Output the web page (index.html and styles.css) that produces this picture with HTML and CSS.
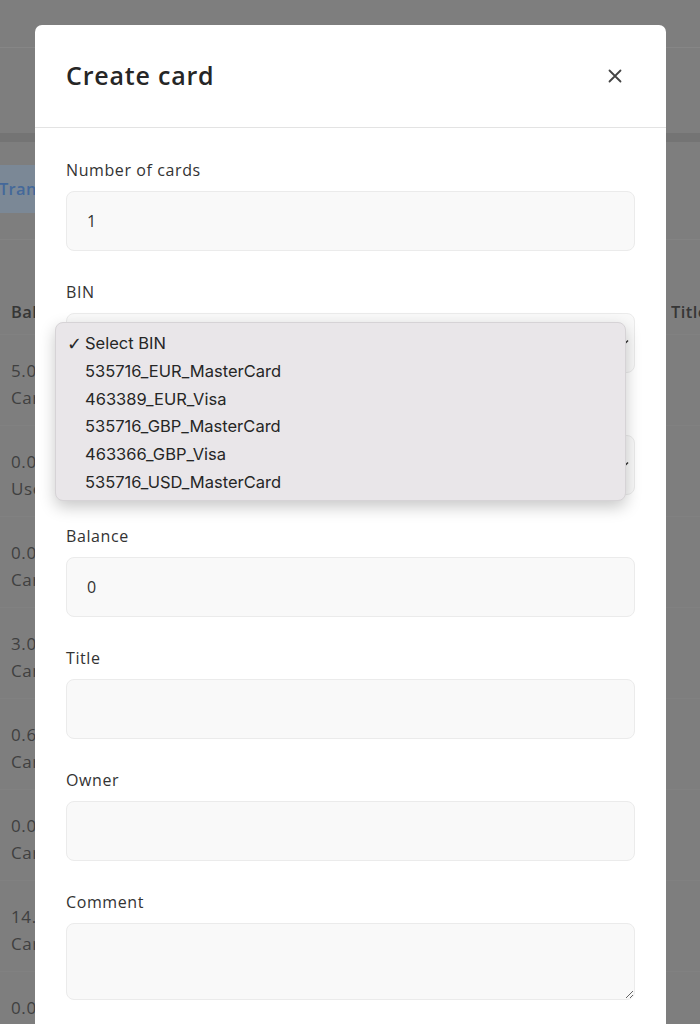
FILE: index.html
```html
<!DOCTYPE html>
<html lang="en">
<head>
<meta charset="utf-8">
<title>Create card</title>
<link rel="stylesheet" href="styles.css">
</head>
<body>
<div class="page">
  <div class="topbar"></div>
  <div class="subbar"></div>
  <div class="band"></div>
  <div class="tabs"><span class="tab">Transactions</span></div>
  <div class="table">
    <div class="thead"><span class="c1">Balance</span><span class="c2">Title</span></div>
    <div class="row"><span class="c1">5.00<br>Card</span></div>
    <div class="row"><span class="c1">0.00<br>Used</span></div>
    <div class="row"><span class="c1">0.00<br>Card</span></div>
    <div class="row"><span class="c1">3.00<br>Card</span></div>
    <div class="row"><span class="c1">0.60<br>Card</span></div>
    <div class="row"><span class="c1">0.00<br>Card</span></div>
    <div class="row"><span class="c1">14.50<br>Card</span></div>
    <div class="row"><span class="c1">0.00<br>Card</span></div>
  </div>
</div>

<div class="modal">
  <div class="modal-header">
    <h2 class="modal-title">Create card</h2>
    <button class="close" aria-label="Close">
      <svg width="14" height="14" viewBox="0 0 14 14"><path d="M1.5 1.5 L12.5 12.5 M12.5 1.5 L1.5 12.5" stroke="#444" stroke-width="1.8" stroke-linecap="round" fill="none"/></svg>
    </button>
  </div>
  <div class="modal-body">
    <div class="field">
      <label class="label">Number of cards</label>
      <div class="input">1</div>
    </div>
    <div class="field">
      <label class="label">BIN</label>
      <div class="input select"><span></span>
        <svg class="chev" width="12" height="8" viewBox="0 0 12 8"><path d="M1 1.5 L6 6.5 L11 1.5" stroke="#333" stroke-width="1.5" fill="none"/></svg>
      </div>
    </div>
    <div class="field">
      <label class="label"></label>
      <div class="input select"><span></span>
        <svg class="chev" width="12" height="8" viewBox="0 0 12 8"><path d="M1 1.5 L6 6.5 L11 1.5" stroke="#333" stroke-width="1.5" fill="none"/></svg>
      </div>
    </div>
    <div class="field">
      <label class="label">Balance</label>
      <div class="input">0</div>
    </div>
    <div class="field">
      <label class="label">Title</label>
      <div class="input"></div>
    </div>
    <div class="field">
      <label class="label">Owner</label>
      <div class="input"></div>
    </div>
    <div class="field">
      <label class="label">Comment</label>
      <textarea class="input textarea"></textarea>
    </div>
  </div>
</div>

<div class="dropdown">
  <div class="opt"><span class="check">✓</span>Select BIN</div>
  <div class="opt"><span class="check"></span>535716_EUR_MasterCard</div>
  <div class="opt"><span class="check"></span>463389_EUR_Visa</div>
  <div class="opt"><span class="check"></span>535716_GBP_MasterCard</div>
  <div class="opt"><span class="check"></span>463366_GBP_Visa</div>
  <div class="opt"><span class="check"></span>535716_USD_MasterCard</div>
</div>
</body>
</html>
```
FILE: styles.css
```css
* { box-sizing: border-box; }
html, body { margin: 0; padding: 0; }
body {
  width: 700px;
  height: 1024px;
  overflow: hidden;
  background: #7e7e7e;
  font-family: "Open Sans", "Noto Sans", sans-serif;
  position: relative;
}

/* background page (dimmed) */
.page { width: 700px; color: #3b3b3b; }
.topbar { height: 48px; border-bottom: 1px solid #868686; }
.subbar { height: 85px; }
.band { height: 9px; background: #747474; }
.tabs { height: 98px; padding-top: 23px; border-bottom: 1px solid #838383; }
.tab {
  display: inline-block;
  height: 48px;
  line-height: 48px;
  padding: 0 12px 0 0;
  margin-left: -1px;
  background: #7b8896;
  color: #44689a;
  font-weight: 600;
  font-size: 16.5px;
  letter-spacing: 0.3px;
}
.table { margin-top: 49px; }
.thead {
  height: 45px;
  display: flex;
  justify-content: space-between;
  align-items: center;
  font-size: 16.5px;
  font-weight: 600;
  color: #363636;
  padding: 0 0 0 11px;
  letter-spacing: 0.4px;
}
.thead .c2 { width: 29px; overflow: hidden; white-space: nowrap; }
.row {
  height: 91px;
  padding: 22px 0 0 11px;
  font-size: 17px;
  line-height: 27px;
  letter-spacing: 0.6px;
  color: #404040;
  border-top: 1px solid #818181;
}

/* modal */
.modal {
  position: absolute;
  left: 35px;
  top: 25px;
  width: 631px;
  height: 1040px;
  background: #fff;
  border-radius: 7px;
}
.modal-header {
  height: 103px;
  border-bottom: 1px solid #e3e3e3;
  display: flex;
  align-items: center;
  justify-content: space-between;
  padding: 0 44px 0 31px;
}
.modal-title {
  margin: 0;
  margin-top: -2px;
  font-size: 25px;
  font-weight: 600;
  color: #262626;
  letter-spacing: 0.8px;
}
.close {
  border: 0;
  background: none;
  padding: 0;
  width: 14px;
  height: 14px;
  display: flex;
}
.modal-body { padding: 30px 31px 0 31px; }
.field { margin-bottom: 29px; }
.label {
  display: block;
  height: 24px;
  line-height: 24px;
  font-size: 16px;
  color: #333;
  margin-bottom: 9px;
  letter-spacing: 0.6px;
}
.input {
  display: flex;
  align-items: center;
  justify-content: space-between;
  width: 100%;
  height: 60px;
  padding: 0 20px;
  background: #f9f9f9;
  border: 1px solid #ebebeb;
  border-radius: 8px;
  font-family: "Open Sans", sans-serif;
  font-size: 16px;
  color: #333;
}
.select { padding-right: 5px; }
.textarea {
  display: block;
  height: 77px;
  resize: vertical;
  outline: none;
}

/* native-like open select list */
.dropdown {
  position: absolute;
  left: 55px;
  top: 322px;
  width: 571px;
  height: 179px;
  padding-top: 7px;
  background: #e9e6e9;
  border: 1px solid #d6d3d6;
  border-radius: 8px;
  box-shadow: 0 6px 16px rgba(0,0,0,0.22);
  font-family: "Inter", "Roboto", sans-serif;
  font-size: 16.5px;
  color: #262626;
}
.opt {
  height: 27.8px;
  line-height: 27.8px;
  padding-left: 12px;
  display: flex;
}
.check {
  width: 18px;
  display: inline-block;
  font-family: "DejaVu Sans", sans-serif;
  font-size: 18px;
  font-weight: bold;
  margin-left: -1px;
}
```
